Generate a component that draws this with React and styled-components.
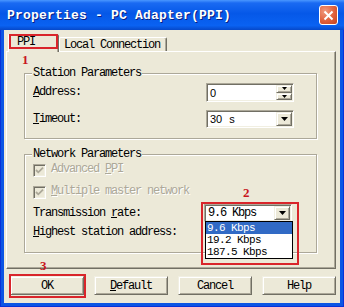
import React from "react";
import styled, { createGlobalStyle } from "styled-components";

const MONO = `"Liberation Mono", "DejaVu Sans Mono", monospace`;
const RED = "#d9252b";

const GlobalStyle = createGlobalStyle`
  html, body { margin: 0; padding: 0; background: #ECE9D8; }
  body { width: 344px; height: 307px; overflow: hidden; }
`;

const Window = styled.div`
  width: 344px;
  height: 307px;
  display: flex;
  flex-direction: column;
  box-sizing: border-box;
  background: #0c55e4;
  box-shadow: inset 1px 0 #0831d9, inset -1px 0 #0831d9, inset 0 -1px #0831d9;
  font-family: ${MONO};
  font-size: 12px;
  letter-spacing: -1.2px;
  color: #000;
`;

const TitleBar = styled.div`
  height: 30px;
  flex: none;
  display: flex;
  align-items: center;
  justify-content: space-between;
  padding: 0 6px 0 7px;
  background: linear-gradient(#4a97ff 0%, #1a6af2 10%, #0558e8 45%, #0a62f2 85%, #0648c9 100%);
`;

const Title = styled.span`
  color: #fff;
  font-weight: bold;
  font-size: 13px;
  letter-spacing: 0.2px;
  text-shadow: 1px 1px #0a1e80;
  margin-top: 1px;
`;

const CloseButton = styled.div`
  width: 19px;
  height: 20px;
  box-sizing: border-box;
  border: 1px solid #fff;
  border-radius: 3px;
  background: radial-gradient(circle at 30% 30%, #f09a7f, #e0603c 55%, #c4421e);
  display: flex;
  align-items: center;
  justify-content: center;
`;

const Body = styled.div`
  flex: 1;
  margin: 0 4px 4px;
  background: #ECE9D8;
  display: flex;
  flex-direction: column;
  padding-top: 4px;
`;

const TabStrip = styled.div`
  display: flex;
  align-items: flex-end;
  height: 17px;
  padding-left: 4px;
`;

const Tab = styled.div`
  position: relative;
  box-sizing: border-box;
  height: ${(p) => (p.$active ? 18 : 14)}px;
  width: ${(p) => p.$w}px;
  margin-bottom: ${(p) => (p.$active ? -1 : 0)}px;
  z-index: ${(p) => (p.$active ? 2 : 0)};
  background: #ECE9D8;
  border: 1px solid;
  border-bottom: none;
  border-color: #fff #716f64 #716f64 #fff;
  border-radius: 2px 2px 0 0;
  box-shadow: inset -1px 0 #aca899;
  display: flex;
  align-items: center;
  padding-left: ${(p) => p.$pad}px;
  padding-bottom: ${(p) => (p.$active ? 3 : 0)}px;
`;

const Panel = styled.div`
  position: relative;
  z-index: 1;
  margin: 0 4px 0 2px;
  height: 218px;
  box-sizing: border-box;
  border: 1px solid;
  border-color: #fff #716f64 #716f64 #fff;
  box-shadow: inset -1px -1px #aca899;
  padding: 21px 18px 0 17px;
`;

const GroupBox = styled.div`
  position: relative;
  margin-top: ${(p) => p.$top || 0}px;
  border: 1px solid #aca899;
  box-shadow: inset 1px 1px #fff, 1px 1px #fff;
  padding: ${(p) => p.$pad};
`;

const Legend = styled.span`
  position: absolute;
  top: -7px;
  left: 7px;
  padding: 0 1px;
  line-height: 12px;
  background: #ECE9D8;
`;

const Row = styled.div`
  display: flex;
  align-items: center;
  justify-content: space-between;
  height: ${(p) => p.$h}px;
`;

const Label = styled.span`
  white-space: nowrap;
  line-height: 13px;
  color: ${(p) => (p.$disabled ? "#aca899" : "#000")};
  text-shadow: ${(p) => (p.$disabled ? "1px 1px #fff" : "none")};
`;

const Key = styled.u`
  text-decoration: underline;
  text-underline-offset: 1px;
`;

const Field = styled.div`
  position: relative;
  width: 88px;
  height: ${(p) => p.$h}px;
  box-sizing: border-box;
  border: 1px solid;
  border-color: #aca899 #fff #fff #aca899;
  box-shadow: inset 1px 1px #716f64, inset -1px -1px #f1efe2;
  background: #fff;
  display: flex;
  align-items: center;
  justify-content: space-between;
  padding: 1px 1px 1px 2px;
`;

const FieldText = styled.span`
  font-family: ${(p) => (p.$sans ? `"Liberation Sans", Arial, sans-serif` : MONO)};
  font-size: ${(p) => (p.$sans ? 11 : 12)}px;
  letter-spacing: ${(p) => (p.$sans ? 0 : -1.2)}px;
  word-spacing: ${(p) => (p.$sans ? 4 : 0)}px;
  padding-left: 1px;
`;

const Raised = styled.div`
  box-sizing: border-box;
  background: #ECE9D8;
  border: 1px solid;
  border-color: #f1efe2 #716f64 #716f64 #f1efe2;
  box-shadow: inset 1px 1px #fff, inset -1px -1px #aca899;
  display: flex;
  align-items: center;
  justify-content: center;
`;

const DropButton = styled(Raised)`
  width: 16px;
  height: 100%;
`;

const Spinner = styled.div`
  width: 16px;
  height: 100%;
  display: flex;
  flex-direction: column;
`;

const SpinHalf = styled(Raised)`
  flex: 1;
`;

const CheckBox = styled.span`
  display: inline-flex;
  vertical-align: -3px;
  width: 13px;
  height: 13px;
  box-sizing: border-box;
  border: 1px solid;
  border-color: #aca899 #fff #fff #aca899;
  box-shadow: inset 1px 1px #716f64, inset -1px -1px #f1efe2;
  background: #ECE9D8;
  align-items: center;
  justify-content: center;
  margin-right: 5px;
`;

const Popup = styled.div`
  position: absolute;
  top: 100%;
  left: 0;
  width: 88px;
  box-sizing: border-box;
  border: 1px solid #000;
  background: #fff;
  z-index: 3;
`;

const Option = styled.div`
  height: 12px;
  line-height: 12px;
  font-size: 11px;
  letter-spacing: -0.6px;
  padding-left: 1px;
  overflow: hidden;
  background: ${(p) => (p.$selected ? "#316ac5" : "#fff")};
  color: ${(p) => (p.$selected ? "#fff" : "#000")};
`;

const Footer = styled.div`
  display: flex;
  justify-content: space-between;
  padding: 7px 4px 0 6px;
`;

const Button = styled(Raised)`
  position: relative;
  width: 74px;
  height: 19px;
`;

const Mark = styled.div`
  position: absolute;
  left: ${(p) => p.$x}px;
  top: ${(p) => p.$y}px;
  width: ${(p) => p.$w}px;
  height: ${(p) => p.$h}px;
  box-sizing: border-box;
  border: 2px solid ${RED};
  z-index: 5;
  pointer-events: none;
`;

const Num = styled.span`
  position: absolute;
  left: ${(p) => p.$x}px;
  top: ${(p) => p.$y}px;
  color: #c8161d;
  font-family: "Liberation Serif", serif;
  font-weight: bold;
  font-size: 13px;
  letter-spacing: 0;
  line-height: 11px;
  z-index: 5;
`;

const Arrow = ({ w = 7, h = 4 }) => (
  <svg width={w} height={h} viewBox={`0 0 ${w} ${h}`}>
    <polygon points={`0,0 ${w},0 ${w / 2},${h}`} fill="#000" />
  </svg>
);

const Tick = () => (
  <svg width="9" height="9" viewBox="0 0 9 9">
    <path d="M1 4 L3.3 6.3 L8 1.6" stroke="#aca899" strokeWidth="1.8" fill="none" />
  </svg>
);

const App = () => (
  <>
    <GlobalStyle />
    <Window>
      <TitleBar>
        <Title>Properties - PC Adapter(PPI)</Title>
        <CloseButton>
          <svg width="11" height="11" viewBox="0 0 11 11">
            <path d="M1.5 1.5 L9.5 9.5 M9.5 1.5 L1.5 9.5" stroke="#fff" strokeWidth="2" />
          </svg>
        </CloseButton>
      </TitleBar>
      <Body>
        <TabStrip>
          <Tab $active $w={51} $pad={8}>
            PPI
            <Mark $x={0} $y={-1} $w={49} $h={15} />
            <Num $x={13} $y={19}>1</Num>
          </Tab>
          <Tab $w={108} $pad={4}>Local Connection</Tab>
        </TabStrip>
        <Panel>
          <GroupBox $pad="5px 22px 6px 8px">
            <Legend>Station Parameters</Legend>
            <Row $h={27}>
              <Label><Key>A</Key>ddress:</Label>
              <Field $h={19}>
                <FieldText $sans>0</FieldText>
                <Spinner>
                  <SpinHalf><Arrow w={5} h={3} /></SpinHalf>
                  <SpinHalf><Arrow w={5} h={3} /></SpinHalf>
                </Spinner>
              </Field>
            </Row>
            <Row $h={26}>
              <Label><Key>T</Key>imeout:</Label>
              <Field $h={18}>
                <FieldText $sans>30 s</FieldText>
                <DropButton><Arrow /></DropButton>
              </Field>
            </Row>
          </GroupBox>
          <GroupBox $top={15} $pad="4px 24px 11px 8px">
            <Legend>Network Parameters</Legend>
            <Row $h={22}>
              <Label $disabled><CheckBox><Tick /></CheckBox>Advanced <Key>P</Key>PI</Label>
            </Row>
            <Row $h={22}>
              <Label $disabled><CheckBox><Tick /></CheckBox><Key>M</Key>ultiple master network</Label>
            </Row>
            <Row $h={20}>
              <Label>Transmission <Key>r</Key>ate:</Label>
              <Field $h={18}>
                <FieldText>9.6 Kbps</FieldText>
                <DropButton><Arrow /></DropButton>
                <Popup>
                  <Option $selected>9.6 Kbps</Option>
                  <Option>19.2 Kbps</Option>
                  <Option>187.5 Kbps</Option>
                </Popup>
                <Mark $x={-4} $y={-3} $w={98} $h={63} />
                <Num $x={38} $y={-18}>2</Num>
              </Field>
            </Row>
            <Row $h={18}>
              <Label><Key>H</Key>ighest station address:</Label>
            </Row>
          </GroupBox>
        </Panel>
        <Footer>
          <Button>
            OK
            <Mark $x={-2} $y={-3} $w={77} $h={24} />
            <Num $x={29} $y={-17}>3</Num>
          </Button>
          <Button><span><Key>D</Key>efault</span></Button>
          <Button>Cancel</Button>
          <Button>Help</Button>
        </Footer>
      </Body>
    </Window>
  </>
);

export default App;
